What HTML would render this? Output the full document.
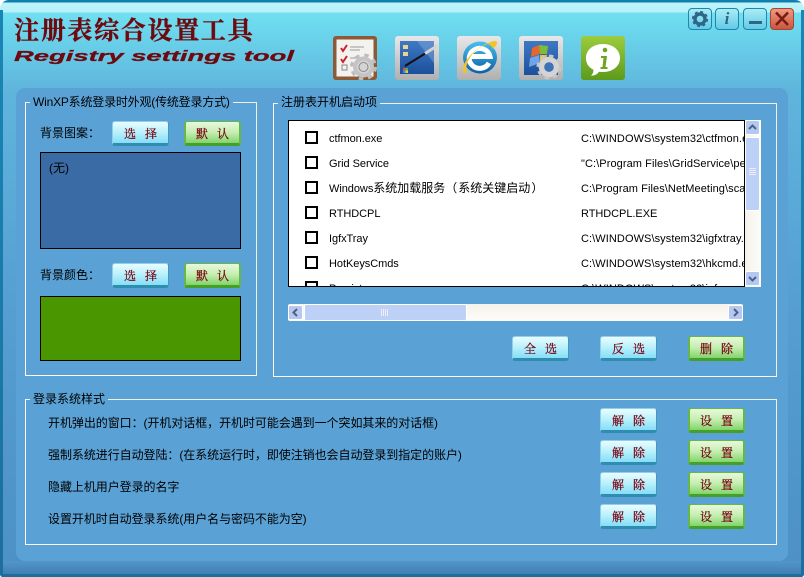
<!DOCTYPE html>
<html><head><meta charset="utf-8">
<style>
*{box-sizing:border-box}
html,body{margin:0;padding:0;width:804px;height:577px;overflow:hidden;background:#fff}
body{position:relative;font:12px/14px "Liberation Sans","WenQuanYi Zen Hei","Noto Sans CJK SC",sans-serif;color:#000}
.a{position:absolute;white-space:nowrap}
#win{position:absolute;left:0;top:0;width:804px;height:577px;border-radius:9px 9px 3px 3px;background:linear-gradient(#0f7fae 0,#0f7fae 2px,#bff3fa 3px,#b5f1f9 12px,#6fe0f1 13px,#5fb5dc 90px,#559fd3 300px,#4d90c5 100%);overflow:hidden}
#lb{position:absolute;left:0;top:10px;width:3px;height:567px;background:linear-gradient(#1a86b5,#1b6f9f)}
#rb{position:absolute;right:0;top:10px;width:3px;height:567px;background:linear-gradient(#1a86b5,#1b6f9f)}
#bb{position:absolute;left:0;top:574px;width:804px;height:3px;background:#1a6f9e}
#panel{position:absolute;left:16px;top:88px;width:772px;height:473px;background:#5aa2d6;border-radius:9px}
#lower{position:absolute;left:3px;top:561px;width:798px;height:13px;background:linear-gradient(#5596c9,#3f7fb3)}
.g{position:absolute;border:1px solid #fff;border-right-color:#f4f1e4;border-top-color:#f4f1e4}
.lg{position:absolute;background:#5aa2d6;padding:0 3px;height:14px;line-height:14px;white-space:nowrap}
.b{position:absolute;width:57px;height:25px;border-radius:3px;text-align:center;line-height:23px;font-family:"Noto Serif CJK SC",serif;color:#7a0010;-webkit-text-stroke:.25px #7a0010;letter-spacing:9px;text-indent:9px;white-space:nowrap}
.bl{background:linear-gradient(#e8fdff,#bdf2fc 45%,#85def7);border:1px solid #8fd0e8;border-bottom:3px solid #2f8db0;border-right-color:#3f9bbd}
.gr{background:linear-gradient(#e8f9dc,#c4eeb0 50%,#82d36c);border:2px solid #66b845;border-bottom:3px solid #45a028;border-top-width:1px}
.ck{position:absolute;left:305px;width:13px;height:13px;border:2px solid #000;background:#fff}
.wb{position:absolute;top:8px;height:22px;border-radius:4px;border:1px solid #1c86ae;background:linear-gradient(#a9ecf5,#62cbe6)}
.s{position:absolute;background:linear-gradient(90deg,#f4f2ea,#fdfcf8)}
.t{position:absolute;background:#bdd0f5;border:1px solid #fff;border-radius:2px}
.ar{position:absolute;width:15px;height:15px;background:#b4c8f2;border:1px solid #fff;border-radius:2px}
.l{font-size:11px;letter-spacing:-.05px;margin-top:1px}
.p{letter-spacing:.08px}
.c{letter-spacing:-.06px}
</style></head><body>
<div id="win">
<div id="lb"></div><div id="rb"></div>
<div id="lower"></div><div id="bb"></div>
<div id="panel"></div>

<div class="a" style="left:14px;top:12px;font:bold 25px/34px 'Noto Serif CJK SC',serif;color:#6d0a10;-webkit-text-stroke:.4px #6d0a10;letter-spacing:1.7px">注册表综合设置工具</div>
<svg class="a" style="left:0;top:40px" width="320" height="30"><text x="14" y="21" font-family="Liberation Sans" font-weight="bold" font-style="italic" font-size="15" fill="#6d0a10" stroke="#6d0a10" stroke-width=".3" textLength="280" lengthAdjust="spacingAndGlyphs">Registry settings tool</text></svg>

<!-- window buttons -->
<div class="wb" style="left:688px;width:24px"><svg width="22" height="20"><circle cx="11" cy="10" r="5" fill="none" stroke="#2c6788" stroke-width="3.4"/><circle cx="11" cy="10" r="7" fill="none" stroke="#2c6788" stroke-width="2.2" stroke-dasharray="2.8 2.7"/></svg></div>
<div class="wb" style="left:715px;width:24px"><div class="a" style="left:0;width:22px;text-align:center;top:1px;font:italic bold 17px/18px 'Liberation Serif',serif;color:#2c6788">i</div></div>
<div class="wb" style="left:743px;width:24px"><div class="a" style="left:5px;top:12px;width:13px;height:3px;background:#2c6788"></div></div>
<div class="wb" style="left:770px;width:24px;background:linear-gradient(#f09a82,#c9553f);border-color:#a8442f"><svg width="22" height="20"><path d="M5 3.5L17 16M17 3.5L5 16" stroke="#7a1c12" stroke-width="2.6" fill="none"/></svg></div>

<!-- toolbar icons -->
<svg class="a" style="left:333px;top:36px" width="44" height="44"><rect width="44" height="44" rx="3" fill="#8d5a35"/><rect x="3.500" y="3.500" width="37" height="37" fill="#f4f2ee"/><path d="M8 12l2 3 4-6M8 23l2 3 4-6" stroke="#c8242c" stroke-width="2" fill="none"/><path d="M17 11h14M17 14h10M17 22h6" stroke="#9a9a9a" stroke-width="1"/><rect x="9" y="29" width="5" height="5" fill="none" stroke="#888"/><circle cx="30.500" cy="31" r="8.500" fill="#d4d4d4" stroke="#c4c4c4" stroke-width="4"/><circle cx="30.500" cy="31" r="12" fill="none" stroke="#bdbdbd" stroke-width="3" stroke-dasharray="4.500 5"/><circle cx="30.500" cy="31" r="4.500" fill="none" stroke="#8a8a8a"/></svg>

<svg class="a" style="left:395px;top:36px" width="44" height="44"><defs><linearGradient id="d" x1="0" y1="0" x2="0" y2="1"><stop offset="0" stop-color="#3f79c4"/><stop offset="1" stop-color="#1c4f9c"/></linearGradient><linearGradient id="fr" x1="0" y1="0" x2="0" y2="1"><stop offset="0" stop-color="#e8e8e8"/><stop offset="1" stop-color="#b0b0b0"/></linearGradient></defs><rect width="44" height="44" rx="3" fill="url(#fr)"/><rect x="5" y="5" width="34" height="33" fill="url(#d)"/><path d="M22 5h17v22z" fill="#7fa6d8" opacity=".5"/><rect x="8" y="9" width="5" height="4" fill="#e8d68a"/><rect x="8" y="16" width="5" height="4" fill="#e8d68a"/><rect x="8" y="32" width="2.500" height="2.500" fill="#e44"/><rect x="10.500" y="32" width="2.500" height="2.500" fill="#4b4"/><rect x="8" y="34.500" width="2.500" height="2.500" fill="#48e"/><rect x="10.500" y="34.500" width="2.500" height="2.500" fill="#ec3"/><path d="M10 30L31 17" stroke="#111" stroke-width="2"/><path d="M30 17.500L42 10" stroke="#d4d4d4" stroke-width="3"/></svg>

<svg class="a" style="left:457px;top:36px" width="44" height="44"><defs><linearGradient id="e" x1="0" y1="0" x2="0" y2="1"><stop offset="0" stop-color="#49c0ee"/><stop offset="1" stop-color="#0c5fa8"/></linearGradient></defs><rect width="44" height="44" rx="3" fill="url(#fr)"/><ellipse cx="23" cy="21.500" rx="17" ry="16" fill="url(#e)"/><path d="M32 27A10.500 10 0 1 1 33 20.500H14" fill="none" stroke="#fff" stroke-width="5"/><path d="M7 37C1 29 22 6 39 5c2 1 1 4-3 8-1-3-3-4-5-5C18 11 7 26 9.500 37z" fill="#f2c428"/></svg>

<svg class="a" style="left:519px;top:36px" width="44" height="44"><rect width="44" height="44" rx="3" fill="url(#fr)"/><rect x="5" y="5" width="34" height="34" fill="url(#d)"/><path d="M13 12l7-3 1 9-9 3z" fill="#e8662c"/><path d="M20 9l9 1-1 8-7 0z" fill="#7fba3c"/><path d="M11 22l9-3 1 8-11 4z" fill="#6fa5e8"/><path d="M21 19h7l-1 7-6 1z" fill="#efc12c"/><circle cx="30" cy="31" r="7.500" fill="none" stroke="#d4d4d4" stroke-width="5.500"/><circle cx="30" cy="31" r="11" fill="none" stroke="#c8c8c8" stroke-width="3" stroke-dasharray="4.300 4.300"/><circle cx="30" cy="31" r="4.500" fill="#3f73b8"/></svg>

<svg class="a" style="left:581px;top:36px" width="44" height="44"><defs><linearGradient id="n" x1="0" y1="0" x2="0" y2="1"><stop offset="0" stop-color="#9ccc3e"/><stop offset="1" stop-color="#5d9a1c"/></linearGradient></defs><rect width="44" height="44" rx="3" fill="url(#n)"/><path d="M22 8c10 0 17 6 17 14s-7 14-17 14c-1 0-3 0-4-.3-2 2.600-4 3.800-8 4 2-2 2.500-4 2.400-6C7 31 5 27 5 22 5 14 12 8 22 8z" fill="#fff"/><circle cx="24" cy="14" r="2.300" fill="#6ea422"/><path d="M20 20h6l-1.500 11h2v2h-7v-2h2l1-9h-2.500z" fill="#6ea422"/></svg>

<!-- left group -->
<div class="g" style="left:25px;top:102px;width:232px;height:274px"></div>
<div class="lg" style="left:30px;top:95px;letter-spacing:-.2px">WinXP系统登录时外观(传统登录方式)</div>
<div class="a" style="left:40px;top:126px">背景图案：</div>
<div class="b bl" style="left:112px;top:121px;width:57px">选择</div>
<div class="b gr" style="left:184px;top:121px">默认</div>
<div class="a" style="left:40px;top:152px;width:201px;height:97px;background:#3a6ba5;border:1px solid #000"></div>
<div class="a" style="left:49px;top:161px">(无)</div>
<div class="a" style="left:40px;top:268px">背景颜色：</div>
<div class="b bl" style="left:112px;top:263px;width:57px">选择</div>
<div class="b gr" style="left:184px;top:263px">默认</div>
<div class="a" style="left:40px;top:296px;width:201px;height:65px;background:#4a9600;border:1px solid #000"></div>

<!-- right group -->
<div class="g" style="left:273px;top:103px;width:504px;height:274px"></div>
<div class="lg" style="left:278px;top:95px">注册表开机启动项</div>
<div class="a" style="left:288px;top:120px;width:457px;height:167px;background:#fff;border:1px solid #000;overflow:hidden"></div>
<div class="a" style="left:289px;top:121px;width:455px;height:165px;overflow:hidden">
 <div class="a l" style="left:40px;top:10px">ctfmon.exe</div><div class="a l p" style="left:292px;top:10px">C:\WINDOWS\system32\ctfmon.exe</div>
 <div class="a l" style="left:40px;top:35px">Grid Service</div><div class="a l p" style="left:292px;top:35px">"C:\Program Files\GridService\peerhost</div>
 <div class="a" style="left:40px;top:60px"><span class="l">Windows</span>系统加载服务（<span style="margin-left:1px;margin-right:1px">系统关键启动</span>）</div><div class="a l p" style="left:292px;top:60px">C:\Program Files\NetMeeting\scardsvr</div>
 <div class="a l" style="left:40px;top:85px">RTHDCPL</div><div class="a l" style="left:292px;top:85px">RTHDCPL.EXE</div>
 <div class="a l" style="left:40px;top:110px">IgfxTray</div><div class="a l p" style="left:292px;top:110px">C:\WINDOWS\system32\igfxtray.exe</div>
 <div class="a l" style="left:40px;top:135px">HotKeysCmds</div><div class="a l p" style="left:292px;top:135px">C:\WINDOWS\system32\hkcmd.exe</div>
 <div class="a l" style="left:40px;top:160px">Persist</div><div class="a l p" style="left:292px;top:160px">C:\WINDOWS\system32\igfxpers.exe</div>
</div>
<div class="ck" style="top:131px"></div><div class="ck" style="top:156px"></div><div class="ck" style="top:181px"></div><div class="ck" style="top:206px"></div><div class="ck" style="top:231px"></div><div class="ck" style="top:256px"></div>
<div class="a" style="left:305px;top:281px;width:13px;height:5px;border:2px solid #000;border-bottom:0;background:#fff"></div>

<!-- vertical scrollbar -->
<div class="s" style="left:745px;top:120px;width:16px;height:167px"></div>
<div class="ar" style="left:745px;top:120px"><svg width="13" height="13"><path d="M3 8l3.500-3.500L10 8" stroke="#4d6185" stroke-width="2" fill="none"/></svg></div>
<div class="t" style="left:745px;top:137px;width:15px;height:74px"><div class="a" style="left:3px;top:30px;width:7px;height:7px;background:repeating-linear-gradient(#eef 0,#eef 1px,transparent 1px,transparent 2px)"></div></div>
<div class="ar" style="left:745px;top:271px"><svg width="13" height="13"><path d="M3 5l3.500 3.500L10 5" stroke="#4d6185" stroke-width="2" fill="none"/></svg></div>

<!-- horizontal scrollbar -->
<div class="s" style="left:288px;top:304px;width:455px;height:17px;background:linear-gradient(#f4f2ea,#fdfcf8);border-radius:2px"></div>
<div class="ar" style="left:288px;top:305px"><svg width="13" height="13"><path d="M8 3L4.500 6.500 8 10" stroke="#4d6185" stroke-width="2" fill="none"/></svg></div>
<div class="t" style="left:304px;top:304px;width:163px;height:17px"><div class="a" style="left:76px;top:4px;width:8px;height:7px;background:repeating-linear-gradient(90deg,#eef 0,#eef 1px,transparent 1px,transparent 2px)"></div></div>
<div class="ar" style="left:728px;top:305px"><svg width="13" height="13"><path d="M5 3L8.500 6.500 5 10" stroke="#4d6185" stroke-width="2" fill="none"/></svg></div>

<div class="b bl" style="left:512px;top:336px">全选</div>
<div class="b bl" style="left:600px;top:336px">反选</div>
<div class="b gr" style="left:688px;top:336px">删除</div>

<!-- bottom group -->
<div class="g" style="left:25px;top:399px;width:752px;height:146px"></div>
<div class="lg" style="left:30px;top:392px">登录系统样式</div>
<div class="a c" style="left:48px;top:416px">开机弹出的窗口：(开机对话框，开机时可能会遇到一个突如其来的对话框)</div>
<div class="a c" style="left:48px;top:448px">强制系统进行自动登陆：(在系统运行时，即使注销也会自动登录到指定的账户)</div>
<div class="a c" style="left:48px;top:480px">隐藏上机用户登录的名字</div>
<div class="a c" style="left:48px;top:512px">设置开机时自动登录系统(用户名与密码不能为空)</div>
<div class="b bl" style="left:600px;top:408px">解除</div><div class="b gr" style="left:688px;top:408px">设置</div>
<div class="b bl" style="left:600px;top:440px">解除</div><div class="b gr" style="left:688px;top:440px">设置</div>
<div class="b bl" style="left:600px;top:472px">解除</div><div class="b gr" style="left:688px;top:472px">设置</div>
<div class="b bl" style="left:600px;top:504px">解除</div><div class="b gr" style="left:688px;top:504px">设置</div>
</div>
</body></html>
